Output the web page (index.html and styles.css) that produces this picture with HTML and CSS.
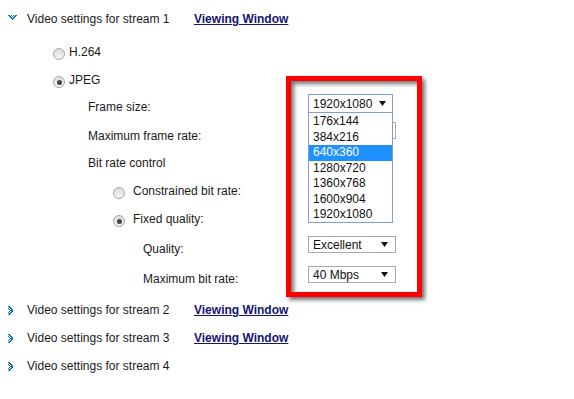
FILE: index.html
```html
<!DOCTYPE html>
<html lang="en">
<head>
    <meta charset="UTF-8">
    <title>Video settings</title>
    <link rel="stylesheet" href="styles.css">
</head>
<body>
<div class="page">

    <div class="stream-head">
        <span class="toggle">
            <svg class="chevron" width="9" height="5" viewBox="0 0 9 5" shape-rendering="crispEdges">
                <rect x="0" y="0" width="2" height="1"/><rect x="3" y="0" width="1" height="1"/>
                <rect x="5" y="0" width="1" height="1"/><rect x="7" y="0" width="2" height="1"/>
                <rect x="1" y="1" width="2" height="1"/><rect x="6" y="1" width="2" height="1"/>
                <rect x="4" y="1" width="1" height="1"/>
                <rect x="2" y="2" width="2" height="1"/><rect x="5" y="2" width="2" height="1"/>
                <rect x="3" y="3" width="3" height="1"/>
                <rect x="4" y="4" width="1" height="1"/>
            </svg>
        </span>
        <span class="stream-title">Video settings for stream 1</span>
        <a href="#" class="view-link">Viewing Window</a>
    </div>

    <div class="row radio-row lvl1 mt-7">
        <span class="radio"></span><span class="radio-label">H.264</span>
    </div>
    <div class="row radio-row lvl1 mt-2">
        <span class="radio checked"></span><span class="radio-label">JPEG</span>
    </div>

    <div class="row field mt-1">
        <span class="label lbl1">Frame size:</span>
        <div class="select open">
            <span>1920x1080</span>
            <svg class="arrow" width="7" height="5" viewBox="0 0 7 5"><path d="M0 0h7L3.5 5z"/></svg>
            <ul class="listbox">
                <li>176x144</li>
                <li>384x216</li>
                <li class="selected">640x360</li>
                <li>1280x720</li>
                <li>1360x768</li>
                <li>1600x904</li>
                <li>1920x1080</li>
            </ul>
        </div>
    </div>
    <div class="row field mt-3">
        <span class="label lbl1">Maximum frame rate:</span>
        <!-- value hidden behind the open list -->
        <div class="select back"></div>
    </div>
    <div class="row field mt-1">
        <span class="label lbl1">Bit rate control</span>
    </div>

    <div class="row radio-row lvl2 mt-2">
        <span class="radio"></span><span class="radio-label">Constrained bit rate:</span>
    </div>
    <div class="row radio-row lvl2 mt-2">
        <span class="radio checked"></span><span class="radio-label">Fixed quality:</span>
    </div>

    <div class="row field mt-4">
        <span class="label lbl2">Quality:</span>
        <div class="select">
            <span>Excellent</span>
            <svg class="arrow" width="7" height="5" viewBox="0 0 7 5"><path d="M0 0h7L3.5 5z"/></svg>
        </div>
    </div>
    <div class="row field mt-4">
        <span class="label lbl2">Maximum bit rate:</span>
        <div class="select">
            <span>40 Mbps</span>
            <svg class="arrow" width="7" height="5" viewBox="0 0 7 5"><path d="M0 0h7L3.5 5z"/></svg>
        </div>
    </div>

    <div class="stream-head mt-5">
        <span class="toggle">
            <svg class="chevron" width="5" height="9" viewBox="0 0 5 9" shape-rendering="crispEdges">
                <rect x="0" y="0" width="2" height="1"/>
                <rect x="1" y="1" width="2" height="1"/>
                <rect x="0" y="2" width="1" height="1"/><rect x="2" y="2" width="2" height="1"/>
                <rect x="1" y="3" width="1" height="1"/><rect x="3" y="3" width="2" height="1"/>
                <rect x="2" y="4" width="3" height="1"/>
                <rect x="1" y="5" width="1" height="1"/><rect x="3" y="5" width="2" height="1"/>
                <rect x="0" y="6" width="1" height="1"/><rect x="2" y="6" width="2" height="1"/>
                <rect x="1" y="7" width="2" height="1"/>
                <rect x="0" y="8" width="2" height="1"/>
            </svg>
        </span>
        <span class="stream-title">Video settings for stream 2</span>
        <a href="#" class="view-link">Viewing Window</a>
    </div>
    <div class="stream-head mt-2">
        <span class="toggle">
            <svg class="chevron" width="5" height="9" viewBox="0 0 5 9" shape-rendering="crispEdges">
                <rect x="0" y="0" width="2" height="1"/>
                <rect x="1" y="1" width="2" height="1"/>
                <rect x="0" y="2" width="1" height="1"/><rect x="2" y="2" width="2" height="1"/>
                <rect x="1" y="3" width="1" height="1"/><rect x="3" y="3" width="2" height="1"/>
                <rect x="2" y="4" width="3" height="1"/>
                <rect x="1" y="5" width="1" height="1"/><rect x="3" y="5" width="2" height="1"/>
                <rect x="0" y="6" width="1" height="1"/><rect x="2" y="6" width="2" height="1"/>
                <rect x="1" y="7" width="2" height="1"/>
                <rect x="0" y="8" width="2" height="1"/>
            </svg>
        </span>
        <span class="stream-title">Video settings for stream 3</span>
        <a href="#" class="view-link">Viewing Window</a>
    </div>
    <div class="stream-head mt-2">
        <span class="toggle">
            <svg class="chevron" width="5" height="9" viewBox="0 0 5 9" shape-rendering="crispEdges">
                <rect x="0" y="0" width="2" height="1"/>
                <rect x="1" y="1" width="2" height="1"/>
                <rect x="0" y="2" width="1" height="1"/><rect x="2" y="2" width="2" height="1"/>
                <rect x="1" y="3" width="1" height="1"/><rect x="3" y="3" width="2" height="1"/>
                <rect x="2" y="4" width="3" height="1"/>
                <rect x="1" y="5" width="1" height="1"/><rect x="3" y="5" width="2" height="1"/>
                <rect x="0" y="6" width="1" height="1"/><rect x="2" y="6" width="2" height="1"/>
                <rect x="1" y="7" width="2" height="1"/>
                <rect x="0" y="8" width="2" height="1"/>
            </svg>
        </span>
        <span class="stream-title">Video settings for stream 4</span>
    </div>

    <!-- annotation frame drawn over the form -->
    <div class="highlight-box"></div>
</div>
</body>
</html>
```

FILE: styles.css
```css
* {
    box-sizing: border-box;
}

body {
    margin: 0;
    padding: 0;
    background-color: #ffffff;
    font-family: "Liberation Sans", Arial, sans-serif;
    font-size: 12px;
    color: #1a1a1a;
}

.page {
    position: relative;
    padding-top: 6px;
    height: 399px;
}

/* stream headers */
.stream-head {
    display: flex;
    align-items: center;
    height: 26px;
    padding-left: 8px;
}

.toggle {
    width: 19px;
    display: flex;
    align-items: center;
}

.chevron {
    fill: #1670bd;
    display: block;
}

.stream-head:first-child .chevron {
    margin-top: -4px;
}

.stream-title {
    width: 167px;
}

.view-link {
    color: #14146e;
    font-weight: bold;
    text-decoration: underline;
}

/* rows */
.row {
    display: flex;
    align-items: center;
    height: 26px;
}

.lvl1 {
    padding-left: 53px;
}

.lvl2 {
    padding-left: 113px;
}

.radio {
    width: 12px;
    height: 12px;
    margin-top: 4px;
    border-radius: 50%;
    border: 1px solid #a6a6a6;
    background: linear-gradient(#dcdcdc, #f4f4f4);
    display: flex;
    align-items: center;
    justify-content: center;
}

.radio.checked::after {
    content: "";
    width: 5px;
    height: 5px;
    border-radius: 50%;
    background-color: #444444;
}

.lvl1 .radio-label {
    margin-left: 4px;
}

.lvl2 .radio-label {
    margin-left: 8px;
}

.field .label {
    width: 308px;
}

.lbl1 {
    padding-left: 88px;
}

.lbl2 {
    padding-left: 143px;
}

/* selects */
.select {
    align-self: flex-start;
    position: relative;
    display: flex;
    align-items: center;
    justify-content: space-between;
    width: 88px;
    height: 17px;
    padding: 0 7px 0 4px;
    border: 1px solid #a9a9a9;
    background-color: #ffffff;
    color: #111111;
}

.select.back {
    margin-top: -1px;
}

.select.open {
    width: 85px;
    height: 19px;
    padding-right: 6px;
    border-color: #7f9ed6;
}

.arrow {
    fill: #111111;
    display: block;
}

.listbox {
    position: absolute;
    top: 17px;
    left: -1px;
    width: 85px;
    height: 111px;
    margin: 0;
    padding: 1px 0 0;
    list-style: none;
    background-color: #ffffff;
    border: 1px solid #7f9ed6;
    z-index: 2;
}

.listbox li {
    height: 15.5px;
    line-height: 15.5px;
    padding-left: 4px;
}

.listbox li.selected {
    background-color: #1e90ff;
    color: #ffffff;
}

/* spacing helpers */
.mt-1 { margin-top: 1px; }
.mt-2 { margin-top: 2px; }
.mt-3 { margin-top: 3px; }
.mt-4 { margin-top: 4px; }
.mt-5 { margin-top: 5px; }
.mt-7 { margin-top: 7px; }

/* red annotation frame */
.highlight-box {
    position: absolute;
    left: 286px;
    top: 76px;
    width: 136px;
    height: 221px;
    border: 5px solid #ff0000;
    box-shadow: inset 3px 3px 4px rgba(0, 0, 0, 0.55), 3px 3px 4px rgba(0, 0, 0, 0.55);
    z-index: 3;
}
```
